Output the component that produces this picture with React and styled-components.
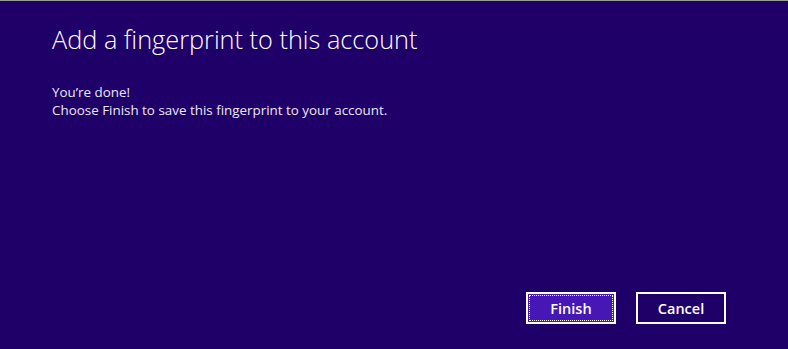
import React from "react";
import styled, { createGlobalStyle } from "styled-components";

const GlobalStyle = createGlobalStyle`
  html, body {
    margin: 0;
    padding: 0;
    background: #1f0068;
  }
`;

const Dialog = styled.div`
  width: 788px;
  height: 349px;
  box-sizing: border-box;
  border-top: 1px solid #9c9c9c;
  background: #1f0068;
  color: #ffffff;
  font-family: "Open Sans", "Liberation Sans", sans-serif;
  display: flex;
  flex-direction: column;
  padding: 0 62px 25px 52px;
`;

const Title = styled.h1`
  margin: 20px 0 0;
  font-size: 25.3px;
  font-weight: 300;
  line-height: 36px;
  letter-spacing: 0;
`;

const Body = styled.div`
  margin-top: 26px;
  font-size: 13.4px;
  line-height: 18px;
  color: #ebe8f5;

  > p {
    margin: 0;
  }
`;

const Footer = styled.div`
  margin-top: auto;
  display: flex;
  justify-content: flex-end;
  gap: 20px;
`;

const Button = styled.button`
  position: relative;
  width: 90px;
  height: 32px;
  box-sizing: border-box;
  border: 2px solid #ffffff;
  background: ${(p) => (p.$primary ? "#4617b4" : "#1f0068")};
  color: #ffffff;
  font-family: "Open Sans", "Liberation Sans", sans-serif;
  font-size: 14.5px;
  font-weight: 600;
  padding: 0;
  cursor: pointer;

  ${(p) =>
    p.$focused &&
    `
    &::after {
      content: "";
      position: absolute;
      inset: 1px;
      border: 1px dotted #ffffff;
    }
  `}
`;

export default function App() {
  return (
    <>
      <GlobalStyle />
      <Dialog>
        <Title>Add a fingerprint to this account</Title>
        <Body>
          <p>You’re done!</p>
          <p>Choose Finish to save this fingerprint to your account.</p>
        </Body>
        <Footer>
          <Button $primary $focused>Finish</Button>
          <Button>Cancel</Button>
        </Footer>
      </Dialog>
    </>
  );
}
